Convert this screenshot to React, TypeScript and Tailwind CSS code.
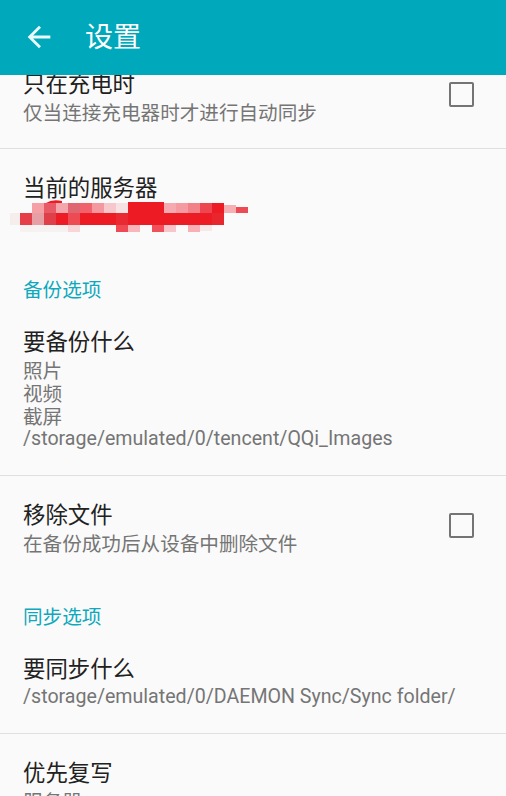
import React from 'react';

const CJK = "font-['Noto_Sans_CJK_SC','Noto_Sans',sans-serif]";
const LATIN = "font-['Roboto','Noto_Sans_CJK_SC',sans-serif]";

type Pref = {
  title: string;
  lines?: { text: string; latin?: boolean }[];
  checkbox?: boolean;
  redacted?: boolean;
};

function Checkbox() {
  return (
    <div className="mr-[9px] flex-shrink-0">
      <div className="w-[25px] h-[25px] rounded-[2px] border-[2.5px] border-[#747474]" />
    </div>
  );
}

// mosaic cells covering the server address
const cells: [number, number, number, number, string][] = [
  // top row
  [32, 203, 12, 10, '#f4a0a5'],
  [44, 203, 12, 10, '#e85a65'],
  [56, 203, 12, 10, '#f3a6ac'],
  [68, 203, 12, 10, '#df6570'],
  [80, 203, 12, 10, '#f0636c'],
  [92, 203, 12, 10, '#f4979e'],
  [104, 203, 12, 10, '#f6c8cb'],
  [116, 203, 12, 10, '#f6e2e3'],
  [128, 202, 36, 11, '#ed1c24'],
  [164, 203, 12, 10, '#f5aab0'],
  [176, 203, 12, 10, '#f59aa0'],
  [188, 203, 12, 10, '#f28088'],
  [200, 203, 12, 10, '#ee4650'],
  [212, 203, 12, 10, '#ed1c24'],
  [224, 205, 12, 8, '#f6b0b4'],
  [236, 207, 12, 6, '#ee4a55'],
  // middle row
  [10, 213, 10, 12, '#f6eded'],
  [20, 213, 12, 12, '#e63e48'],
  [32, 213, 12, 12, '#e6a0a5'],
  [44, 213, 12, 12, '#df3f48'],
  [56, 213, 12, 12, '#ed1c24'],
  [68, 213, 12, 12, '#ee4a53'],
  [80, 213, 36, 12, '#ed1c24'],
  [116, 213, 12, 12, '#ea2a32'],
  [128, 213, 84, 12, '#ed1c24'],
  [212, 213, 12, 12, '#e8262e'],
  // bottom row
  [20, 225, 48, 7, '#f6f2f2'],
  [68, 225, 12, 7, '#f8d6d8'],
  [116, 225, 12, 7, '#ef4a54'],
  [128, 225, 12, 7, '#f8b6ba'],
  [152, 225, 12, 7, '#ef505a'],
  [164, 225, 12, 7, '#f8c6ca'],
  [188, 225, 12, 7, '#f8b0b5'],
  [200, 225, 12, 6, '#f8e8e8'],
];

function Redaction() {
  return (
    <svg
      width="250"
      height="32"
      viewBox="0 200 250 32"
      className="block -ml-[23px] -mt-[4px] -mb-[5px]"
    >
      <path d="M46 203 Q52 199 62 201 L62 204 L46 204 Z" fill="#ed1c24" />
      {cells.map(([x, y, w, h, c], i) => (
        <rect key={i} x={x} y={y} width={w} height={h} fill={c} />
      ))}
    </svg>
  );
}

function PrefItem({ title, lines = [], checkbox, redacted }: Pref) {
  return (
    <div className="flex items-center pl-[23px] pr-[23px] pt-[20px] pb-[25px]">
      <div className="flex-1 min-w-0">
        <div className={`${CJK} text-[22.4px] leading-[35px] text-[#212121] whitespace-nowrap`}>{title}</div>
        {redacted && <Redaction />}
        {lines.map((l, i) => (
          <div
            key={i}
            className={`${l.latin ? LATIN : CJK} text-[19.6px] leading-[23px] text-[#757575] whitespace-nowrap`}
          >
            {l.text}
          </div>
        ))}
      </div>
      {checkbox && <Checkbox />}
    </div>
  );
}

function Category({ label }: { label: string }) {
  return (
    <div className={`${CJK} pl-[23px] pt-[25px] pb-[3px] text-[19.6px] leading-[23px] text-[#0ea9bc]`}>
      {label}
    </div>
  );
}

const Divider = () => <div className="h-px bg-[#e0e0e0]" />;

export default function App() {
  return (
    <div className="w-[506px] h-[796px] overflow-hidden bg-[#fafafa] flex flex-col">
      {/* toolbar */}
      <div className="h-[75px] flex-shrink-0 bg-[#00a8bb] flex items-start pl-[22px] relative z-10">
        <svg viewBox="0 0 24 24" className="w-[34px] h-[34px] mt-[20px]" fill="#ffffff" fillOpacity={0.92}>
          <path d="M20 11H7.83l5.59-5.59L12 4l-8 8 8 8 1.41-1.41L7.83 13H20v-2z" />
        </svg>
        <div className={`${CJK} ml-[29px] mt-[15px] text-[28px] leading-[40px] text-white`}>设置</div>
      </div>

      {/* preference list, scrolled a little */}
      <div className="flex-1 overflow-hidden">
        <div className="-mt-[30px]">
          <PrefItem title="只在充电时" lines={[{ text: '仅当连接充电器时才进行自动同步' }]} checkbox />
          <Divider />
          <PrefItem title="当前的服务器" redacted />
          <Category label="备份选项" />
          <PrefItem
            title="要备份什么"
            lines={[
              { text: '照片' },
              { text: '视频' },
              { text: '截屏' },
              { text: '/storage/emulated/0/tencent/QQi_Images', latin: true },
            ]}
          />
          <Divider />
          <PrefItem title="移除文件" lines={[{ text: '在备份成功后从设备中删除文件' }]} checkbox />
          <Category label="同步选项" />
          <PrefItem
            title="要同步什么"
            lines={[{ text: '/storage/emulated/0/DAEMON Sync/Sync folder/', latin: true }]}
          />
          <Divider />
          <PrefItem title="优先复写" lines={[{ text: '服务器' }]} />
        </div>
      </div>
    </div>
  );
}
